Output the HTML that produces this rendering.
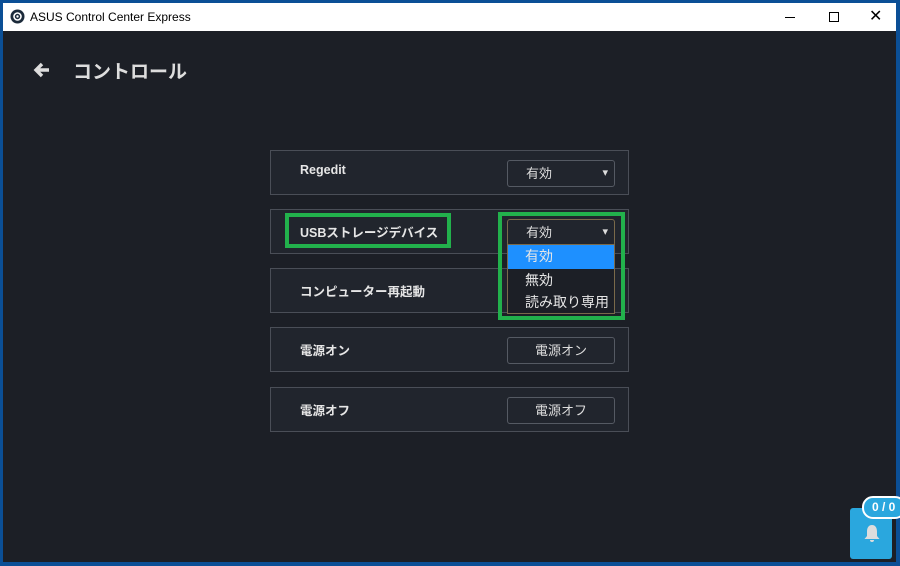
<!DOCTYPE html>
<html><head><meta charset="utf-8"><style>
*{margin:0;padding:0;box-sizing:border-box}
body{width:900px;height:566px;background:#0b4f96;position:relative;overflow:hidden;font-family:"Liberation Sans","Noto Sans CJK JP",sans-serif}
.win{position:absolute;left:3px;top:3px;width:893px;height:559px;background:#1c1f26}
.title{position:absolute;left:0;top:0;width:893px;height:28px;background:#fff;color:#000;font-size:12px}
.abs{position:absolute}
.row{position:absolute;left:267px;width:359px;height:45px;border:1px solid #4a4e57;background:#21252d}
.lbl{position:absolute;left:29px;top:12px;color:#e6e6e6;font-size:12.5px;font-weight:bold}
.btn{position:absolute;left:236px;top:9px;width:108px;height:27px;border:1px solid #555a63;border-radius:3px;color:#ddd;font-size:13px;text-align:center;line-height:25px}
.sel{text-align:left;padding-left:18px}
.sel::after{content:"▾";position:absolute;right:6px;top:0;font-size:11px}
.g{position:absolute;border:4px solid #22b14c}
</style></head><body>
<div class="win">
 <div class="title">
  <svg class="abs" style="left:7px;top:6px" width="15" height="15" viewBox="0 0 15 15"><circle cx="7.5" cy="7.5" r="7" fill="#1b2a3a"/><circle cx="7.5" cy="7.5" r="3.5" fill="none" stroke="#fff" stroke-width="1.6"/><circle cx="7.5" cy="7.5" r="1.2" fill="#fff"/></svg>
  <span class="abs" style="left:27px;top:7px">ASUS Control Center Express</span>
  <div class="abs" style="left:782px;top:14px;width:10px;height:1px;background:#000"></div>
  <div class="abs" style="left:826px;top:9px;width:10px;height:10px;border:1px solid #000"></div>
  <span class="abs" style="left:866px;top:3px;font-size:16px">✕</span>
 </div>
 <svg class="abs" style="left:29px;top:58px" width="18" height="18" viewBox="0 0 18 18"><path d="M17 9H4M10 3L4 9l6 6" fill="none" stroke="#ddd" stroke-width="3.4" stroke-linejoin="miter"/></svg>
 <span class="abs" style="left:70px;top:54px;color:#ddd;font-size:19px;font-weight:bold">コントロール</span>

 <div class="row" style="top:147px"><span class="lbl">Regedit</span><div class="btn sel">有効</div></div>
 <div class="row" style="top:206px"><span class="lbl">USBストレージデバイス</span><div class="btn sel" style="border-color:#7a6a4a">有効</div></div>
 <div class="row" style="top:265px"><span class="lbl">コンピューター再起動</span></div>
 <div class="row" style="top:324px"><span class="lbl">電源オン</span><div class="btn">電源オン</div></div>
 <div class="row" style="top:384px"><span class="lbl">電源オフ</span><div class="btn">電源オフ</div></div>

 <div class="abs" style="left:504px;top:241px;width:108px;height:70px;background:#1c1f26;border:1px solid #7a6a4a;color:#e6e6e6;font-size:14px">
  <div style="height:24px;background:#1e90ff;padding-left:17px;line-height:22px">有効</div>
  <div style="height:22px;padding-left:17px;line-height:22px">無効</div>
  <div style="height:22px;padding-left:17px;line-height:22px">読み取り専用</div>
 </div>
 <div class="g" style="left:282px;top:210px;width:166px;height:35px"></div>
 <div class="g" style="left:495px;top:209px;width:127px;height:108px"></div>

 <div class="abs" style="left:847px;top:505px;width:42px;height:51px;background:#2aa7de;border-radius:3px"></div>
 <div class="abs" style="left:859px;top:493px;width:44px;height:23px;background:#2aa7de;border:2px solid #fff;border-radius:11px;color:#fff;font-weight:bold;font-size:12px;line-height:19px;padding-left:8px">0 / 0</div>
 <svg class="abs" style="left:859px;top:520px" width="20" height="22" viewBox="0 0 20 22"><path d="M10 2c-3.5 0-5 3-5 6.5v4.5l-2.5 3h15L15 13V8.5C15 5 13.5 2 10 2z M8 17h4a2 2 0 0 1-4 0z" fill="#ddd"/></svg>
</div>
</body></html>
